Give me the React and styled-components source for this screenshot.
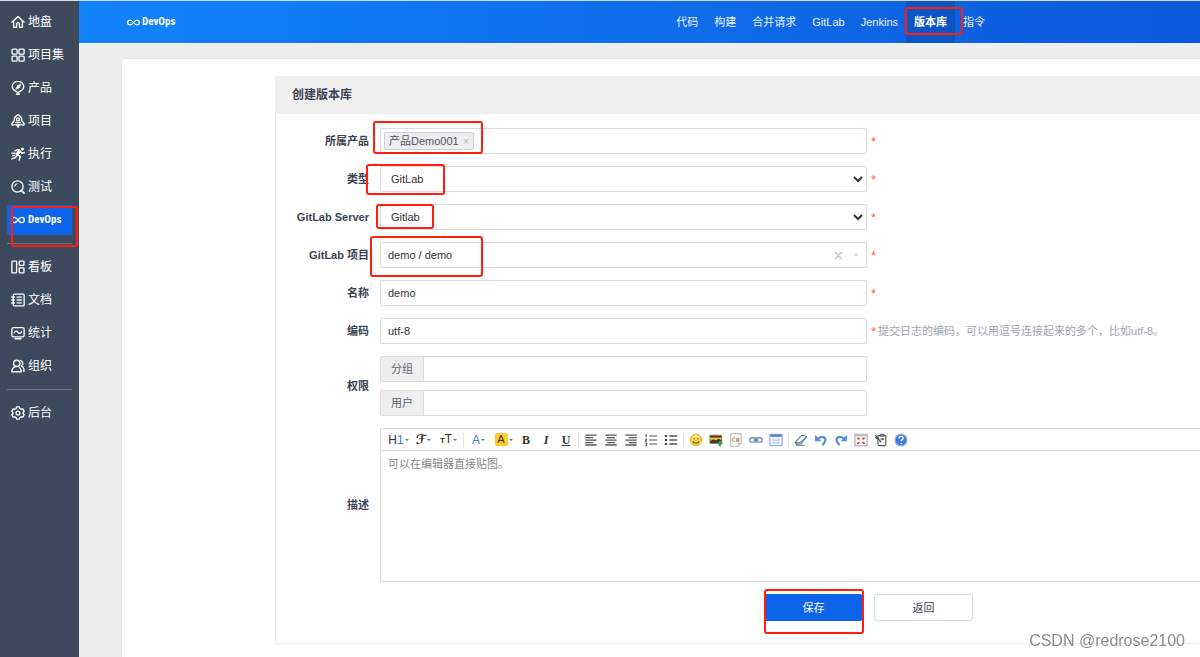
import React from 'react'
import styled, { createGlobalStyle, css } from 'styled-components'

const colors = {
  side: '#3d4a5d',
  primary: '#0c64eb',
  text: '#3c4353',
  muted: '#9ea3b0',
  border: '#dcdcdc',
  mark: '#ff1e10',
}

const GlobalStyle = createGlobalStyle`
  *, *::before, *::after {
    box-sizing: border-box;
  }

  body {
    margin: 0;
    background: #eee;
    color: ${colors.text};
    font-family: "Liberation Sans", "Noto Sans CJK SC", sans-serif;
    font-size: 11px;
    line-height: 16px;
    overflow-x: hidden;
  }

  button, input, select, textarea {
    font: inherit;
    color: inherit;
  }
`

/* ---------- icons ---------- */

const Svg = ({ children, size = 14, ...rest }) => (
  <svg
    width={size}
    height={size}
    viewBox="0 0 16 16"
    fill="none"
    stroke="currentColor"
    strokeWidth="1.5"
    strokeLinecap="round"
    strokeLinejoin="round"
    aria-hidden="true"
    {...rest}
  >
    {children}
  </svg>
)

const sideIcons = {
  home: <path d="M1 8.2 8 1.8l7 6.4M3 7v7h3.4v-3.6a1.6 1.6 0 0 1 3.2 0V14H13V7" />,
  grid: (
    <>
      <rect x="1.2" y="1.2" width="5.8" height="5.8" rx="1" />
      <rect x="9.2" y="1.2" width="5.8" height="5.8" rx="1" />
      <rect x="1.2" y="9.2" width="5.8" height="5.8" rx="1" />
      <rect x="9.2" y="9.2" width="5.8" height="5.8" rx="1" />
    </>
  ),
  bulb: (
    <>
      <path d="M5.4 11.6C3.2 10.6 1.4 8.8 1.4 6.4a6.6 6 0 0 1 13.2 0c0 2.400-1.800 4.200-4 5.200L8 13.300Z" />
      <path d="m11.400 3.400-1.600 4.400-4.400 1.900L7 5.400Z" fill="currentColor" strokeWidth="0.5" />
      <path d="M6.500 15h3" strokeWidth="1.800" />
    </>
  ),
  rocket: (
    <>
      <path d="M8 .8c3.200 1.600 4.600 4 4.400 7.200l2.400 2.600c.6 1 .3 1.900-.6 2.200L10.800 12H5.200l-3.400.8c-.9-.3-1.200-1.200-.6-2.200L3.600 8C3.400 4.800 4.800 2.400 8 .8Z" />
      <circle cx="8" cy="6.200" r="1.700" />
      <path d="M5.500 9.600h5M6.600 12.500 8 15.200l1.400-2.700" />
    </>
  ),
  run: (
    <>
      <circle cx="13" cy="2.400" r="1.300" fill="currentColor" strokeWidth="1" />
      <path d="M4.500 4.200 8 3l3 2-3.400 4 3 1.800-1.200 4M7.400 9.200l-2 2.600L1 13.600M11 5l1.500 2.200L15 6.400M1 7h3.600M2 9.700h2" strokeWidth="1.700" />
      <path d="M9.400 4 6.400 8.200" strokeWidth="2.600" />
    </>
  ),
  search: (
    <>
      <circle cx="7.400" cy="7.400" r="6.400" />
      <path d="m12 12.200 2.800 2.800" strokeWidth="2.200" />
      <path d="M4.300 7A3.200 3.200 0 0 1 7 4.200" strokeWidth="1.200" />
    </>
  ),
  infinity: (
    <path d="M8 8C6.600 6.200 5.400 5 3.800 5a3 3 0 0 0 0 6C5.400 11 6.600 9.800 8 8s2.600-3 4.200-3a3 3 0 0 1 0 6C10.600 11 9.400 9.800 8 8Z" />
  ),
  board: (
    <>
      <rect x="1" y="1.200" width="5.400" height="13.600" rx=".8" />
      <rect x="9.400" y="1.200" width="5.400" height="5" rx=".8" />
      <rect x="9.400" y="9" width="5.400" height="5.800" rx=".8" />
    </>
  ),
  doc: (
    <>
      <rect x="2.600" y="1.200" width="12.400" height="13.600" rx="1.200" />
      <path d="M.8 4.600h3M.8 8h3M.8 11.400h3M7 4.800h5M7 8h5M7 11.200h5" />
    </>
  ),
  chart: (
    <>
      <rect x="1" y="1.800" width="14" height="10.600" rx="1.800" />
      <path d="M3.800 7.600c1.600-2.400 2.900-2 4.200-.4s2.600 1.600 4.200-.6M4.600 14.600h6.800" />
    </>
  ),
  team: (
    <>
      <circle cx="6.600" cy="5" r="3.600" />
      <path d="M1 14.400c0-3 1.800-4.800 3.600-5.400M1 14.600h10.600c0-3-1-4.800-2.800-5.800M10.600 1.600a3.500 3.500 0 0 1 1.200 6.400c2 .8 3.200 2.800 3.200 5.800h-1" />
    </>
  ),
  gear: (
    <>
      <path d="m6.400 1-.5 1.900-1.500.8-1.900-.5L.9 6l1.400 1.400v1.200L.9 10l1.600 2.800 1.900-.5 1.500.8.5 1.900h3.200l.5-1.900 1.500-.8 1.900.5 1.600-2.800-1.400-1.400V7.400L15.100 6l-1.600-2.800-1.900.5-1.500-.8L9.600 1Z" />
      <circle cx="8" cy="8" r="2.200" />
    </>
  ),
}

const toolIcons = {
  left: <path d="M1.500 2.500h13M1.500 5.300h9M1.500 8.100h13M1.500 10.900h9M1.500 13.700h13" stroke="#555" />,
  center: <path d="M1.500 2.500h13M3.500 5.300h9M1.500 8.100h13M3.500 10.900h9M1.500 13.700h13" stroke="#555" />,
  right: <path d="M1.500 2.500h13M5.500 5.300h9M1.500 8.100h13M5.500 10.900h9M1.500 13.700h13" stroke="#555" />,
  ordered: (
    <path d="M6 3.400h9M6 8h9M6 12.600h9M1.600 2.200l1-.4v3M1.400 6.800h1.400v1.200L1.400 9.400h1.600M1.400 11.400h1.600v3H1.400M2 12.800h1" stroke="#555" strokeWidth="1.300" />
  ),
  bullets: (
    <>
      <path d="M6 3.400h9M6 8h9M6 12.600h9" stroke="#555" />
      <path d="M1 3.400h2.600M1 8h2.600M1 12.600h2.600" stroke="#444" strokeWidth="2.400" />
    </>
  ),
  smile: (
    <>
      <circle cx="8" cy="8" r="6.600" fill="#ffd04a" stroke="#eda92a" strokeWidth="1" />
      <ellipse cx="8" cy="4.400" rx="4.200" ry="1.900" fill="#ffe793" stroke="none" />
      <path d="M5.700 5.600v1.600M10.300 5.600v1.600M4.200 9.400c1.600 3 6 3 7.600 0" stroke="#7a4a10" strokeWidth="1.200" />
    </>
  ),
  image: (
    <>
      <rect x="1" y="2.500" width="13.500" height="9.500" fill="#fbb930" stroke="#777" strokeWidth="1" />
      <path d="M1.500 3h12.500v2H1.500ZM1.500 9l3.500-2 3 1.500 3-2 3 1.500v3.500H1.500Z" fill="#3e3528" stroke="none" />
      <path d="M12.500 9v6M9.500 12h6" stroke="#2fa84f" strokeWidth="2.200" />
    </>
  ),
  code: (
    <>
      <path d="M2 .8h12v11L10.600 15.200H2Z" fill="#fafafa" stroke="#aaa" strokeWidth="1" />
      <path d="M14 11.800h-3.400v3.400" stroke="#aaa" strokeWidth="1" />
      <path d="M7 5.800H5.400a1.200 1.200 0 0 0-1.200 1.200v1.600a1.200 1.200 0 0 0 1.200 1.200H7M9 5.600v4.600M11 5.600v4.600M8.200 6.800h3.800M8.200 8.900h3.800" stroke="#b08358" strokeWidth="1" />
    </>
  ),
  link: (
    <>
      <rect x=".8" y="5.400" width="7.400" height="5" rx="2.500" stroke="#7b92b8" />
      <rect x="7.800" y="5.400" width="7.400" height="5" rx="2.500" stroke="#7b92b8" />
      <path d="M5 8h6" stroke="#5d7499" />
    </>
  ),
  table: (
    <>
      <rect x="1" y="1.500" width="14" height="13" fill="#fff" stroke="#6e92cf" strokeWidth="1" />
      <path d="M1.500 3h13" stroke="#4f7ed0" strokeWidth="2.600" strokeLinecap="butt" />
      <path d="M1 8h14M1 11.200h14M5.700 4v10.500M10.400 4v10.500" stroke="#a9c1e8" strokeWidth="1" />
    </>
  ),
  eraser: (
    <>
      <path d="M1.500 10.500 9 2.500l5.500 1.500L8 12.500 2.500 13Z" fill="#f8fafc" stroke="#60759a" strokeWidth="1.200" />
      <path d="m1.500 11 5 .3L14 4.800M2.500 14h10" stroke="#60759a" strokeWidth="1.200" />
    </>
  ),
  undo: (
    <>
      <path d="M5 6.400C9 3 13.400 4.600 13 8.200c-.2 2-1.400 3.800-3.400 5.600" stroke="#5b8ee0" strokeWidth="2.600" />
      <path d="M1.200 2v7.400h7.400Z" fill="#5b8ee0" stroke="none" />
    </>
  ),
  redo: (
    <>
      <path d="M11 6.400C7 3 2.600 4.600 3 8.200c.2 2 1.400 3.800 3.400 5.600" stroke="#5b8ee0" strokeWidth="2.600" />
      <path d="M14.800 2v7.400H7.400Z" fill="#5b8ee0" stroke="none" />
    </>
  ),
  full: (
    <>
      <rect x="1" y="1.500" width="14" height="13" fill="#f6f6f6" stroke="#aaa" strokeWidth="1.200" />
      <path d="M1.500 3h13" stroke="#bbb" strokeWidth="1.600" />
      <path d="m4 5.500 2.200 1.600M12 5.500 9.800 7.100M4 12.500l2.200-2M12 12.500l-2.200-2" stroke="#d0363b" strokeWidth="1.900" />
    </>
  ),
  source: (
    <>
      <path d="M4.500 3h9v9a2 2 0 0 1-2 2.500h-5a2 2 0 0 1-2-2Z" fill="#f2f2f2" stroke="#555" strokeWidth="1.300" />
      <path d="M7 1.500h4.500v2H7Z" fill="#999" stroke="#555" strokeWidth="1" />
      <path d="M1.500 2.500 8 10.500M1.500 5l2 1.500M7.500 7h4" stroke="#444" strokeWidth="1.400" />
    </>
  ),
  help: (
    <>
      <circle cx="8" cy="8" r="6.800" fill="#3f78dc" stroke="#8fb0ea" strokeWidth="1.400" />
      <path d="M5.800 6.200c0-3 4.600-3 4.600-.2 0 1.600-2.200 1.600-2.200 3.400M8.200 11.400v1.400" stroke="#fff" strokeWidth="1.500" />
    </>
  ),
}

/* ---------- data ---------- */

const sideMenu = [
  [
    { icon: 'home', label: '地盘' },
    { icon: 'grid', label: '项目集' },
    { icon: 'bulb', label: '产品' },
    { icon: 'rocket', label: '项目' },
    { icon: 'run', label: '执行' },
    { icon: 'search', label: '测试' },
    { icon: 'infinity', label: 'DevOps', active: true },
  ],
  [
    { icon: 'board', label: '看板' },
    { icon: 'doc', label: '文档' },
    { icon: 'chart', label: '统计' },
    { icon: 'team', label: '组织' },
  ],
  [{ icon: 'gear', label: '后台' }],
]

const topMenu = ['代码', '构建', '合并请求', 'GitLab', 'Jenkins', '版本库', '指令']

const toolGroups = [
  [
    ['left', '左对齐'],
    ['center', '居中'],
    ['right', '右对齐'],
    ['ordered', '编号'],
    ['bullets', '项目符号'],
  ],
  [
    ['smile', '插入表情'],
    ['image', '图片'],
    ['code', '插入程序代码'],
    ['link', '超级链接'],
    ['table', '表格'],
  ],
  [
    ['eraser', '删除格式'],
    ['undo', '后退'],
    ['redo', '前进'],
    ['full', '全屏显示'],
    ['source', 'HTML代码'],
    ['help', '帮助'],
  ],
]

/* ---------- page ---------- */

const App = () => {
  return (
    <Page>
      <GlobalStyle />
      <Sidebar>
        {sideMenu.map((group, i) => (
          <SideGroup key={i}>
            {group.map(({ icon, label, active }) => (
              <li key={label}>
                <SideLink href="#" $active={active}>
                  <Svg>{sideIcons[icon]}</Svg>
                  {active ? <BrandText>{label}</BrandText> : label}
                  {active && <Mark $top={1} $left={4} $width={67} $height={41} />}
                </SideLink>
              </li>
            ))}
          </SideGroup>
        ))}
      </Sidebar>

      <Main>
        <TopBar>
          <Brand href="#">
            <Svg size={13}>{sideIcons.infinity}</Svg>
            <BrandText>DevOps</BrandText>
          </Brand>
          <TopNav>
            {topMenu.map(item => (
              <TopLink key={item} href="#" $active={item === '版本库'}>
                {item}
                {item === '版本库' && <Mark $top={6} $left={-1} $width={58} $height={28} />}
              </TopLink>
            ))}
          </TopNav>
        </TopBar>

        <Card>
          <Panel>
            <PanelTitle>创建版本库</PanelTitle>
            <Form onSubmit={e => e.preventDefault()}>
              <Row>
                <Label htmlFor="product">所属产品</Label>
                <Control>
                  <Box>
                    <Chip>
                      产品Demo001
                      <ChipClose type="button" aria-label="移除">×</ChipClose>
                    </Chip>
                    <BareInput id="product" />
                  </Box>
                  <Mark $top={-7} $left={-7} $width={110} $height={33} />
                </Control>
                <Tip><Required>*</Required></Tip>
              </Row>

              <Row>
                <Label htmlFor="type">类型</Label>
                <Control>
                  <Select id="type" defaultValue="GitLab">
                    <option>GitLab</option>
                  </Select>
                  <Mark $top={-2} $left={-14} $width={79} $height={31} />
                </Control>
                <Tip><Required>*</Required></Tip>
              </Row>

              <Row>
                <Label htmlFor="server">GitLab Server</Label>
                <Control>
                  <Select id="server" defaultValue="Gitlab">
                    <option>Gitlab</option>
                  </Select>
                  <Mark $top={0} $left={-4} $width={58} $height={25} />
                </Control>
                <Tip><Required>*</Required></Tip>
              </Row>

              <Row>
                <Label htmlFor="project">GitLab 项目</Label>
                <Control>
                  <Box $picker>
                    <BareInput id="project" defaultValue="demo / demo" />
                    <ClearButton type="button" aria-label="清除">
                      <Svg size={9} strokeWidth="2"><path d="m2 2 12 12M14 2 2 14" /></Svg>
                    </ClearButton>
                    <Caret $faint />
                  </Box>
                  <Mark $top={-6} $left={-10} $width={113} $height={41} />
                </Control>
                <Tip><Required>*</Required></Tip>
              </Row>

              <Row>
                <Label htmlFor="name">名称</Label>
                <Control><Input id="name" defaultValue="demo" /></Control>
                <Tip><Required>*</Required></Tip>
              </Row>

              <Row>
                <Label htmlFor="encoding">编码</Label>
                <Control><Input id="encoding" defaultValue="utf-8" /></Control>
                <Tip>
                  <Required>*</Required>
                  提交日志的编码，可以用逗号连接起来的多个，比如utf-8。
                </Tip>
              </Row>

              <Row>
                <Label as="span">权限</Label>
                <Stack>
                  <InputGroup>
                    <label htmlFor="groups">分组</label>
                    <BareInput id="groups" />
                  </InputGroup>
                  <InputGroup>
                    <label htmlFor="users">用户</label>
                    <BareInput id="users" />
                  </InputGroup>
                </Stack>
              </Row>

              <Row $wide>
                <Label htmlFor="desc">描述</Label>
                <Editor>
                  <Toolbar>
                    <DropTool type="button" aria-label="段落"><span>H<b>1</b></span><Caret /></DropTool>
                    <DropTool type="button" aria-label="字体"><Script>ℱ</Script><Caret /></DropTool>
                    <DropTool type="button" aria-label="文字大小"><span><small>T</small>T</span><Caret /></DropTool>
                    <Divider />
                    <DropTool type="button" aria-label="文字颜色"><b>A</b><Caret /></DropTool>
                    <DropTool type="button" aria-label="文字背景"><Highlight>A</Highlight><Caret /></DropTool>
                    <LetterTool type="button" aria-label="粗体">B</LetterTool>
                    <LetterTool type="button" aria-label="斜体" $italic>I</LetterTool>
                    <LetterTool type="button" aria-label="下划线" $underline>U</LetterTool>
                    {toolGroups.map((group, i) => (
                      <React.Fragment key={i}>
                        <Divider />
                        {group.map(([icon, label]) => (
                          <Tool key={icon} type="button" aria-label={label}>
                            <Svg strokeLinecap="butt">{toolIcons[icon]}</Svg>
                          </Tool>
                        ))}
                      </React.Fragment>
                    ))}
                  </Toolbar>
                  <TextArea id="desc" placeholder="可以在编辑器直接贴图。" />
                </Editor>
              </Row>

              <Actions>
                <ButtonWrap>
                  <Button type="submit" $primary>保存</Button>
                  <Mark $top={-5} $left={0} $width={100} $height={45} />
                </ButtonWrap>
                <ButtonWrap>
                  <Button type="button">返回</Button>
                </ButtonWrap>
              </Actions>
            </Form>
          </Panel>
        </Card>
      </Main>
      <Watermark>CSDN @redrose2100</Watermark>
    </Page>
  )
}

/* ---------- styles ---------- */

const Page = styled.div`
  display: flex;
  min-height: 100vh;
  border-top: 1px solid #d3dbe4;
`

// hand drawn red frame around the part the reader should look at
const Mark = styled.i`
  position: absolute;
  z-index: 2;
  top: ${p => p.$top}px;
  left: ${p => p.$left}px;
  width: ${p => p.$width}px;
  height: ${p => p.$height}px;
  border: 2px solid ${colors.mark};
  border-radius: 3px;
  pointer-events: none;
`

const Sidebar = styled.nav`
  flex: 0 0 79px;
  padding: 6px 7px;
  background: ${colors.side};
`

const SideGroup = styled.ul`
  display: flex;
  flex-direction: column;
  gap: 3px;
  margin: 0;
  padding: 0;
  list-style: none;

  & + & {
    margin-top: 8px;
    padding-top: 8px;
    border-top: 1px solid #6b7686;
  }
`

const SideLink = styled.a`
  position: relative;
  display: flex;
  align-items: center;
  gap: 3px;
  height: 30px;
  padding-left: 4px;
  border-radius: 2px;
  background: ${p => (p.$active ? colors.primary : 'transparent')};
  color: #fff;
  font-size: 12px;
  text-decoration: none;
  white-space: nowrap;
`

const BrandText = styled.span`
  font-family: "Liberation Sans Narrow", "Roboto Condensed", Roboto, sans-serif;
  font-size: 11px;
  font-weight: 700;
`

const Main = styled.div`
  flex: 1;
  min-width: 0;
  display: flex;
  flex-direction: column;
`

const TopBar = styled.header`
  display: flex;
  align-items: stretch;
  height: 42px;
  padding: 0 207px 0 48px;
  background: linear-gradient(90deg, #1183fb 0%, #0c59db 100%);
`

const Brand = styled.a`
  display: flex;
  align-items: center;
  gap: 2px;
  color: #fff;
  text-decoration: none;
`

const TopNav = styled.nav`
  display: flex;
  margin-left: auto;
`

const TopLink = styled.a`
  position: relative;
  display: flex;
  align-items: center;
  padding: 0 8px;
  color: #e8f1ff;
  text-decoration: none;
  white-space: nowrap;

  ${p => p.$active && css`
    background: #0b55c6;
    color: #fff;
    font-weight: 700;
  `}
`

const Card = styled.main`
  flex: 1;
  margin: 16px 0 0 43px;
  padding: 17px 0 0 153px;
  border-radius: 3px 0 0 0;
  background: #fff;
  box-shadow: 0 0 2px rgba(0, 0, 0, 0.12);
`

const Panel = styled.section`
  border: solid #eee;
  border-width: 0 0 1px 1px;
`

const PanelTitle = styled.h2`
  margin: 0;
  padding: 11px 16px;
  background: #efefef;
  font-size: 12px;
  font-weight: 700;
  line-height: 16px;
`

const Form = styled.form`
  display: flex;
  flex-direction: column;
  gap: 12px;
  padding: 14px 0 22px;
`

const Row = styled.div`
  display: grid;
  grid-template-columns: 104px ${p => (p.$wide ? 'minmax(0, 1fr)' : 'minmax(0, 487px) minmax(0, 1fr)')};
  align-items: center;
`

const Label = styled.label`
  padding-right: 11px;
  font-weight: 700;
  text-align: right;
`

const Control = styled.div`
  position: relative;
`

const field = css`
  width: 100%;
  height: 26px;
  border: 1px solid ${colors.border};
  border-radius: 2px;
  background: #fff;
  color: #333;
`

const Box = styled.div`
  ${field}
  display: flex;
  align-items: center;
  gap: 10px;
  padding: 0 7px 0 ${p => (p.$picker ? 7 : 3)}px;
`

const Input = styled.input`
  ${field}
  padding: 0 7px;
`

const Select = styled.select`
  ${field}
  padding: 0 0 0 6px;
`

const BareInput = styled.input`
  flex: 1;
  min-width: 0;
  padding: 0;
  border: 0;
  background: none;
`

const Chip = styled.span`
  display: flex;
  align-items: center;
  gap: 4px;
  height: 18px;
  padding: 0 4px;
  border: 1px solid #cbd0db;
  border-radius: 2px;
  background: #eee;
  color: #505667;
`

const ChipClose = styled.button`
  padding: 0;
  border: 0;
  background: none;
  color: #b5b9c2;
`

const ClearButton = styled.button`
  display: flex;
  padding: 0;
  border: 0;
  background: none;
  color: #bbb;
`

const Caret = styled.i`
  border: solid transparent;
  border-width: ${p => (p.$faint ? '3px 3px 0' : '2px 2px 0')};
  border-top-color: ${p => (p.$faint ? '#d5dce6' : '#777')};
`

const Tip = styled.div`
  display: flex;
  align-items: center;
  gap: 2px;
  padding-left: 4px;
  color: ${colors.muted};
  white-space: nowrap;
`

const Required = styled.span`
  padding-top: 2px;
  color: #ff5d5d;
  font-size: 13px;
`

const Stack = styled.div`
  display: flex;
  flex-direction: column;
  gap: 8px;
`

const InputGroup = styled.div`
  ${field}
  display: flex;

  label {
    padding: 4px 10px;
    border-right: 1px solid ${colors.border};
    background: #eee;
    color: #5c6375;
  }
`

const Editor = styled.div`
  display: flex;
  flex-direction: column;
  border: 1px solid ${colors.border};
  border-right: 0;
`

const Toolbar = styled.div`
  display: flex;
  align-items: center;
  height: 22px;
  padding-left: 5px;
  border-bottom: 1px solid ${colors.border};
`

const Divider = styled.span`
  width: 1px;
  height: 14px;
  margin: 0 2px;
  background: #e2e2e2;
`

const Tool = styled.button`
  display: flex;
  align-items: center;
  justify-content: center;
  width: 20px;
  height: 20px;
  padding: 0;
  border: 0;
  background: none;
  color: #333;
`

const DropTool = styled(Tool)`
  gap: 1px;
  width: 25px;
  font-size: 12px;

  b {
    color: #3c78e0;
    font-weight: 400;
  }

  small {
    font-size: 8px;
    font-weight: 700;
  }
`

const LetterTool = styled(Tool)`
  font-family: "Liberation Serif", serif;
  font-size: 12px;
  font-weight: 700;
  font-style: ${p => (p.$italic ? 'italic' : 'normal')};
  text-decoration: ${p => (p.$underline ? 'underline' : 'none')};
`

const Script = styled.span`
  font-family: "DejaVu Sans", sans-serif;
  font-size: 13px;
  font-weight: 700;
`

const Highlight = styled.span`
  width: 13px;
  border-radius: 2px;
  background: #fecb2f;
  font-size: 11px;
  line-height: 13px;
`

const TextArea = styled.textarea`
  display: block;
  width: 100%;
  height: 130px;
  padding: 5px 7px;
  border: 0;
  outline: 0;
  resize: none;

  &::placeholder {
    color: #888;
    opacity: 1;
  }
`

const Actions = styled.div`
  display: flex;
  gap: 11px;
  padding-left: 488px;
`

const ButtonWrap = styled.div`
  position: relative;
`

const Button = styled.button`
  display: block;
  min-width: 99px;
  height: 27px;
  border: 1px solid ${p => (p.$primary ? colors.primary : '#d8dbe6')};
  border-radius: 3px;
  background: ${p => (p.$primary ? colors.primary : '#fff')};
  color: ${p => (p.$primary ? '#fff' : colors.text)};
`

const Watermark = styled.div`
  position: fixed;
  right: 15px;
  bottom: 6px;
  z-index: 3;
  color: #8c8c8c;
  font-size: 16px;
  line-height: 20px;
`

export default App
